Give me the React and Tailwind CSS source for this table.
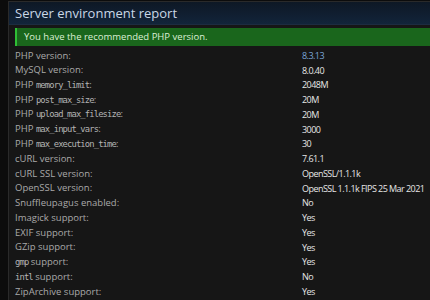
import React from 'react';

const rows = [
  { label: 'PHP version:', value: '8.3.13', link: true },
  { label: 'MySQL version:', value: '8.0.40' },
  { label: 'PHP ', code: 'memory_limit', value: '2048M' },
  { label: 'PHP ', code: 'post_max_size', value: '20M' },
  { label: 'PHP ', code: 'upload_max_filesize', value: '20M' },
  { label: 'PHP ', code: 'max_input_vars', value: '3000' },
  { label: 'PHP ', code: 'max_execution_time', value: '30' },
  { label: 'cURL version:', value: '7.61.1' },
  { label: 'cURL SSL version:', value: 'OpenSSL/1.1.1k' },
  { label: 'OpenSSL version:', value: 'OpenSSL 1.1.1k FIPS 25 Mar 2021' },
  { label: 'Snuffleupagus enabled:', value: 'No' },
  { label: 'Imagick support:', value: 'Yes' },
  { label: 'EXIF support:', value: 'Yes' },
  { label: 'GZip support:', value: 'Yes' },
  { code: 'gmp', label: ' support:', codeFirst: true, value: 'Yes' },
  { code: 'intl', label: ' support:', codeFirst: true, value: 'No' },
  { label: 'ZipArchive support:', value: 'Yes' },
];

const Code = ({ children }) => (
  <span className="font-['DejaVu_Sans_Mono',monospace] text-[8.8px] tracking-[-0.85px] text-[#b4b4b4]">{children}</span>
);

const App = () => {
  return (
    <div className="w-[430px] h-[300px] overflow-hidden bg-[#0c0c0c] font-['Open_Sans',sans-serif]">
      <div className="ml-[8px] mt-[1px] bg-[#161616] border-t border-l border-[#2a2a2a] h-[310px]">
        {/* header */}
        <div className="h-[23px] flex items-center pl-[6px] bg-gradient-to-b from-[#0e1825] to-[#12243a] border-b border-[#1c2c40]">
          <h2 className="text-[13px] text-[#c9d7e6] leading-none">Server environment report</h2>
        </div>

        {/* success notice */}
        <div className="ml-[6px] mt-[3px] h-[18px] flex items-center pl-[7px] bg-[#1a661c] border-l-2 border-[#2fbf35]">
          <span className="text-[9.5px] text-[#dcefd6] leading-none">You have the recommended PHP version.</span>
        </div>

        {/* rows */}
        <div className="pl-[6px] pt-[2px]">
          {rows.map((r, i) => (
            <div key={i} className="flex h-[14.75px] items-center text-[9.5px] leading-none whitespace-nowrap">
              <div className="w-[287px] shrink-0 text-[#a9a9a9]">
                {r.codeFirst ? (
                  <>
                    <Code>{r.code}</Code>
                    {r.label}
                  </>
                ) : (
                  <>
                    {r.label}
                    {r.code && (
                      <>
                        <Code>{r.code}</Code>:
                      </>
                    )}
                  </>
                )}
              </div>
              <div
                className={`text-[9px] tracking-[-0.55px] ${r.link ? 'text-[#7aa5d6]' : 'text-[#e6e6e6]'}`}
              >
                {r.value}
              </div>
            </div>
          ))}
        </div>
      </div>
    </div>
  );
};

export default App;
